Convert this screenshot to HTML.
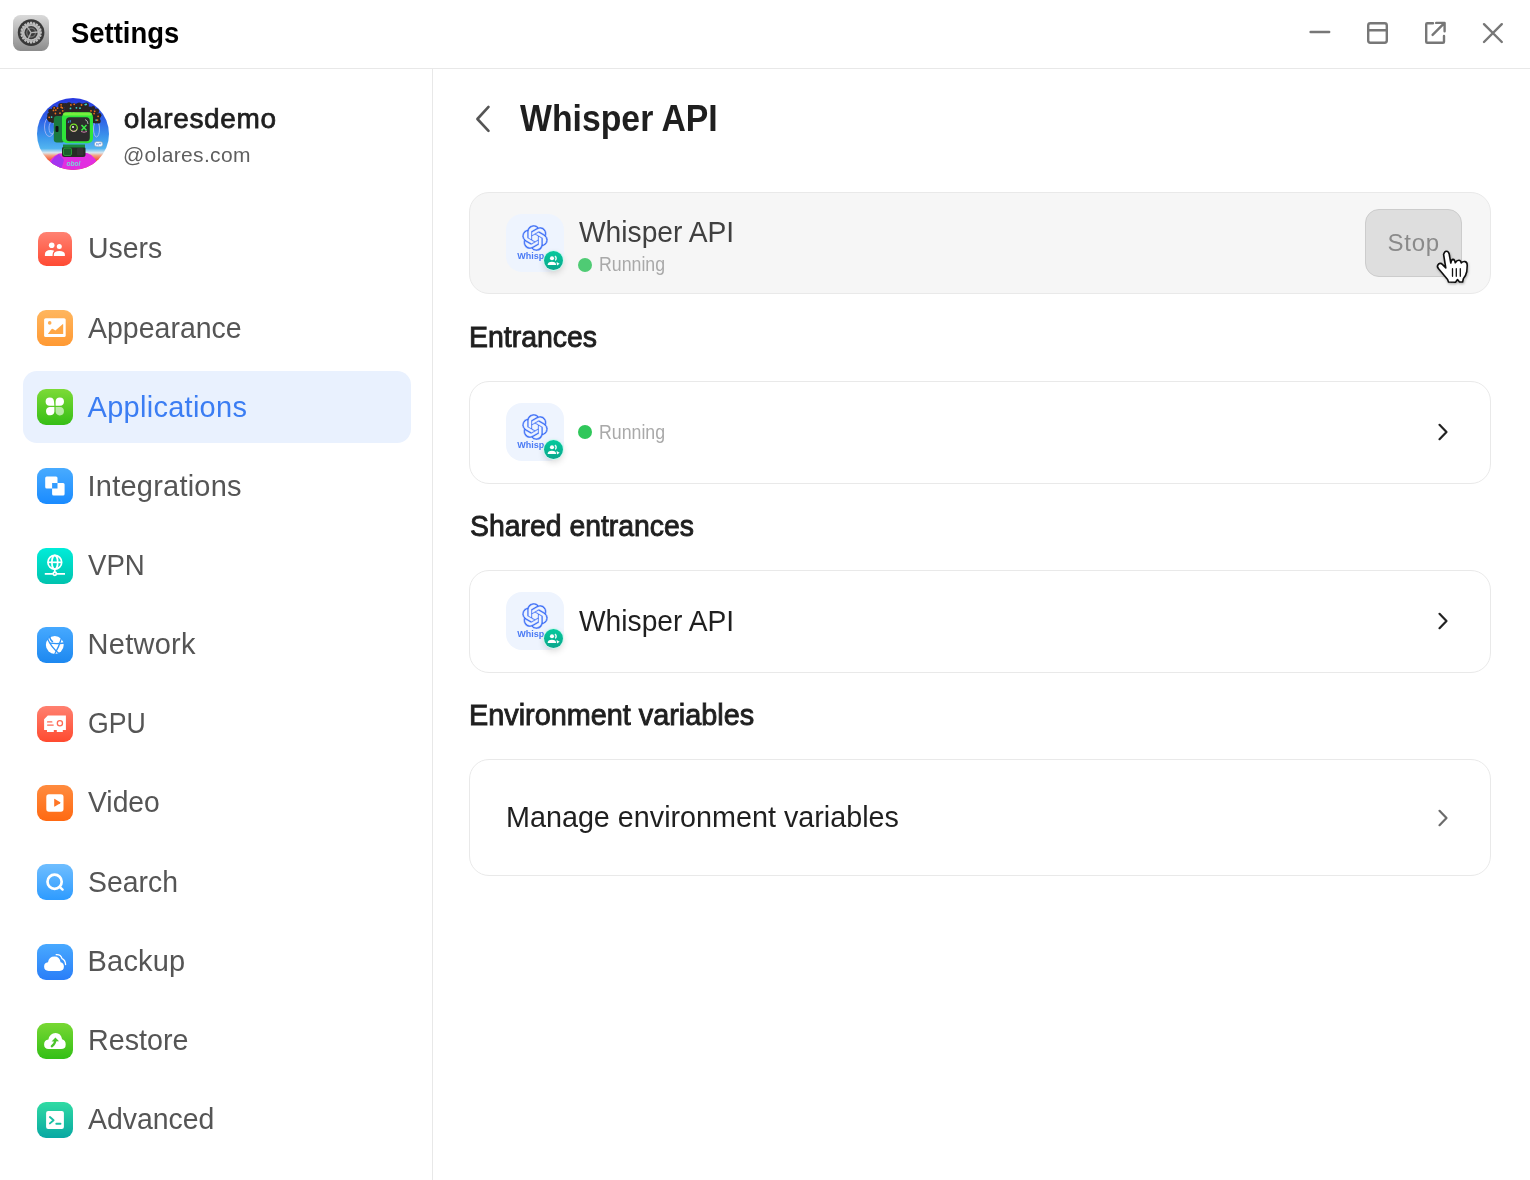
<!DOCTYPE html><html><head><meta charset="utf-8"><style>
html,body{margin:0;padding:0;}
body{width:1530px;height:1180px;position:relative;overflow:hidden;background:#fff;font-family:"Liberation Sans",sans-serif;}
.t{position:absolute;white-space:pre;}
#w{position:absolute;left:0;top:0;width:1530px;height:1180px;will-change:transform;}
.a{position:absolute;display:block;}
</style></head><body><div id="w">
<div class="a" style="left:0;top:68px;width:1530px;height:1px;background:#e8e8e8"></div>
<div class="a" style="left:432px;top:69px;width:1px;height:1111px;background:#e8e8e8"></div>
<svg class="a" style="left:13px;top:15px" width="36" height="36" viewBox="0 0 36 36"><defs><linearGradient id="gs" x1="0" y1="0" x2="0" y2="1"><stop offset="0" stop-color="#dadada"/><stop offset="1" stop-color="#8c8c8c"/></linearGradient></defs><rect width="36" height="36" rx="7.5" fill="url(#gs)"/><circle cx="18.1" cy="17.6" r="13.3" fill="#383838"/><g fill="#bdbdbd"><path d="M16.50 9.60 L17.10 6.80 L19.10 6.80 L19.70 9.60 Z" transform="rotate(0 18.1 17.6)"/><path d="M16.50 9.60 L17.10 6.80 L19.10 6.80 L19.70 9.60 Z" transform="rotate(18 18.1 17.6)"/><path d="M16.50 9.60 L17.10 6.80 L19.10 6.80 L19.70 9.60 Z" transform="rotate(36 18.1 17.6)"/><path d="M16.50 9.60 L17.10 6.80 L19.10 6.80 L19.70 9.60 Z" transform="rotate(54 18.1 17.6)"/><path d="M16.50 9.60 L17.10 6.80 L19.10 6.80 L19.70 9.60 Z" transform="rotate(72 18.1 17.6)"/><path d="M16.50 9.60 L17.10 6.80 L19.10 6.80 L19.70 9.60 Z" transform="rotate(90 18.1 17.6)"/><path d="M16.50 9.60 L17.10 6.80 L19.10 6.80 L19.70 9.60 Z" transform="rotate(108 18.1 17.6)"/><path d="M16.50 9.60 L17.10 6.80 L19.10 6.80 L19.70 9.60 Z" transform="rotate(126 18.1 17.6)"/><path d="M16.50 9.60 L17.10 6.80 L19.10 6.80 L19.70 9.60 Z" transform="rotate(144 18.1 17.6)"/><path d="M16.50 9.60 L17.10 6.80 L19.10 6.80 L19.70 9.60 Z" transform="rotate(162 18.1 17.6)"/><path d="M16.50 9.60 L17.10 6.80 L19.10 6.80 L19.70 9.60 Z" transform="rotate(180 18.1 17.6)"/><path d="M16.50 9.60 L17.10 6.80 L19.10 6.80 L19.70 9.60 Z" transform="rotate(198 18.1 17.6)"/><path d="M16.50 9.60 L17.10 6.80 L19.10 6.80 L19.70 9.60 Z" transform="rotate(216 18.1 17.6)"/><path d="M16.50 9.60 L17.10 6.80 L19.10 6.80 L19.70 9.60 Z" transform="rotate(234 18.1 17.6)"/><path d="M16.50 9.60 L17.10 6.80 L19.10 6.80 L19.70 9.60 Z" transform="rotate(252 18.1 17.6)"/><path d="M16.50 9.60 L17.10 6.80 L19.10 6.80 L19.70 9.60 Z" transform="rotate(270 18.1 17.6)"/><path d="M16.50 9.60 L17.10 6.80 L19.10 6.80 L19.70 9.60 Z" transform="rotate(288 18.1 17.6)"/><path d="M16.50 9.60 L17.10 6.80 L19.10 6.80 L19.70 9.60 Z" transform="rotate(306 18.1 17.6)"/><path d="M16.50 9.60 L17.10 6.80 L19.10 6.80 L19.70 9.60 Z" transform="rotate(324 18.1 17.6)"/><path d="M16.50 9.60 L17.10 6.80 L19.10 6.80 L19.70 9.60 Z" transform="rotate(342 18.1 17.6)"/><circle cx="18.1" cy="17.6" r="8.4"/></g><circle cx="18.1" cy="17.6" r="6.6" fill="#3a3a3a"/><circle cx="18.1" cy="17.6" r="4.4" fill="none" stroke="#707070" stroke-width="1.3"/><g stroke="#b4b4b4" stroke-width="1.3"><path d="M18.1 17.6 L18.1 10.700000000000001" transform="rotate(-35 18.1 17.6)"/><path d="M18.1 17.6 L18.1 10.700000000000001" transform="rotate(85 18.1 17.6)"/><path d="M18.1 17.6 L18.1 10.700000000000001" transform="rotate(205 18.1 17.6)"/></g></svg>
<div class="t" style="left:70.71px;top:19.00px;font-size:29px;line-height:29px;font-weight:700;color:#000;letter-spacing:0.000px;transform:scaleX(0.9451);transform-origin:0 0;">Settings</div>
<svg class="a" style="left:1300px;top:12px" width="220" height="44" viewBox="1300 12 220 44"><g stroke="#777" stroke-width="2.4" fill="none" stroke-linecap="round" stroke-linejoin="round"><path d="M1310.6 32 H1329.2"/><rect x="1368.2" y="23.2" width="18.6" height="19.6" rx="2.2"/><path d="M1368.2 30.2 H1386.8"/><path d="M1433 23.2 H1427.2 Q1426.2 23.2 1426.2 24.2 V41.8 Q1426.2 42.8 1427.2 42.8 H1443 Q1444 42.8 1444 41.8 V36"/><path d="M1436.2 22.9 H1444.6 V31.3 M1444.3 23.2 L1432.6 34.9"/><path d="M1484 24.2 L1501.8 42 M1501.8 24.2 L1484 42"/></g></svg>
<svg class="a" style="left:37px;top:98px" width="72" height="72" viewBox="0 0 72 72">
<defs><clipPath id="av"><circle cx="36" cy="36" r="36"/></clipPath>
<linearGradient id="avbg" x1="0" y1="0" x2="0" y2="1"><stop offset="0" stop-color="#2838e0"/><stop offset="0.3" stop-color="#2f62e6"/><stop offset="0.55" stop-color="#3c98ec"/><stop offset="0.7" stop-color="#52b4f0"/><stop offset="0.76" stop-color="#d8e6ee"/><stop offset="0.8" stop-color="#f4a080"/><stop offset="0.86" stop-color="#f05a38"/><stop offset="1" stop-color="#f04a2c"/></linearGradient></defs>
<g clip-path="url(#av)">
<rect width="72" height="72" fill="url(#avbg)"/>
<ellipse cx="12.5" cy="29" rx="5" ry="9.5" fill="none" stroke="#b0b8f4" stroke-width="0.9" opacity="0.9"/>
<ellipse cx="15" cy="30" rx="3" ry="6" fill="none" stroke="#c8d0f8" stroke-width="0.8" opacity="0.8"/>
<ellipse cx="59.5" cy="31" rx="3" ry="8" fill="none" stroke="#b8c8f4" stroke-width="0.9" opacity="0.9"/>
<path d="M10 72 Q11 60 22 55.5 L50 55 Q60 58 62 72 Z" fill="#e22ee0"/>
<path d="M12 72 Q13 61 22 56 L27 62 L24 72 Z" fill="#a434f0"/>
<text x="29.5" y="68" font-size="6.5" fill="#78d8d8" font-family="Liberation Sans" font-weight="700" font-style="italic">obol</text>
<rect x="25" y="48.5" width="23.5" height="10.5" rx="2.5" fill="#262b26"/>
<rect x="26.5" y="50" width="8" height="7.5" rx="1.5" fill="#1c5e2c" stroke="#2fd040" stroke-width="0.6"/>
<rect x="40" y="50" width="6.5" height="7.5" rx="1" fill="#333"/>
<rect x="26" y="46.5" width="22" height="3" fill="#1b8a3c"/>
<g fill="#2b2424"><circle cx="23.9" cy="7.6" r="2.6"/><circle cx="26.2" cy="7.5" r="2.4"/><circle cx="28.7" cy="7.2" r="2.1"/><circle cx="32.0" cy="6.9" r="2.6"/><circle cx="34.6" cy="7.7" r="2.1"/><circle cx="36.6" cy="7.1" r="2.0"/><circle cx="39.6" cy="7.7" r="2.3"/><circle cx="42.1" cy="7.2" r="2.6"/><circle cx="45.2" cy="7.8" r="2.2"/><circle cx="47.7" cy="7.4" r="2.5"/><circle cx="49.4" cy="7.1" r="2.5"/><circle cx="17.5" cy="10.7" r="2.5"/><circle cx="21.3" cy="10.9" r="2.1"/><circle cx="23.8" cy="10.0" r="2.3"/><circle cx="25.7" cy="10.7" r="2.1"/><circle cx="29.4" cy="10.9" r="2.2"/><circle cx="31.2" cy="10.4" r="2.5"/><circle cx="33.8" cy="11.2" r="2.1"/><circle cx="36.8" cy="9.9" r="2.1"/><circle cx="39.4" cy="10.6" r="2.2"/><circle cx="42.5" cy="11.0" r="2.1"/><circle cx="44.8" cy="10.1" r="2.4"/><circle cx="47.5" cy="11.1" r="2.5"/><circle cx="50.5" cy="9.9" r="2.0"/><circle cx="53.0" cy="10.8" r="2.2"/><circle cx="56.1" cy="10.2" r="2.1"/><circle cx="13.5" cy="13.1" r="2.3"/><circle cx="16.8" cy="13.2" r="2.6"/><circle cx="19.3" cy="12.9" r="2.1"/><circle cx="22.0" cy="14.0" r="2.6"/><circle cx="25.1" cy="13.6" r="2.1"/><circle cx="27.8" cy="14.1" r="2.0"/><circle cx="30.2" cy="13.8" r="2.2"/><circle cx="32.4" cy="13.6" r="2.4"/><circle cx="35.9" cy="13.8" r="2.5"/><circle cx="38.2" cy="13.8" r="2.5"/><circle cx="41.0" cy="13.9" r="2.5"/><circle cx="43.9" cy="13.3" r="2.3"/><circle cx="46.0" cy="13.7" r="2.6"/><circle cx="49.5" cy="13.3" r="2.4"/><circle cx="51.8" cy="14.0" r="2.1"/><circle cx="54.0" cy="13.6" r="2.3"/><circle cx="57.4" cy="14.1" r="2.2"/><circle cx="59.6" cy="13.0" r="2.5"/><circle cx="12.4" cy="17.0" r="2.2"/><circle cx="14.9" cy="16.4" r="2.5"/><circle cx="18.4" cy="16.3" r="2.3"/><circle cx="21.1" cy="17.0" r="2.4"/><circle cx="23.1" cy="16.0" r="2.3"/><circle cx="26.3" cy="16.5" r="2.2"/><circle cx="29.4" cy="16.4" r="2.0"/><circle cx="31.8" cy="16.6" r="2.2"/><circle cx="33.7" cy="16.0" r="2.3"/><circle cx="36.6" cy="15.9" r="2.4"/><circle cx="40.1" cy="17.1" r="2.4"/><circle cx="41.9" cy="16.5" r="2.4"/><circle cx="45.4" cy="16.5" r="2.4"/><circle cx="47.8" cy="16.9" r="2.5"/><circle cx="50.2" cy="16.4" r="2.4"/><circle cx="53.2" cy="16.6" r="2.5"/><circle cx="56.6" cy="16.4" r="2.4"/><circle cx="58.9" cy="16.8" r="2.1"/><circle cx="62.1" cy="17.2" r="2.3"/><circle cx="12.3" cy="20.1" r="2.5"/><circle cx="15.3" cy="19.9" r="2.3"/><circle cx="18.3" cy="19.0" r="2.2"/><circle cx="20.2" cy="19.0" r="2.3"/><circle cx="23.8" cy="19.8" r="2.6"/><circle cx="25.8" cy="19.5" r="2.2"/><circle cx="29.0" cy="19.5" r="2.5"/><circle cx="31.3" cy="19.3" r="2.5"/><circle cx="33.9" cy="20.0" r="2.6"/><circle cx="37.1" cy="19.1" r="2.3"/><circle cx="39.8" cy="18.8" r="2.6"/><circle cx="42.3" cy="19.9" r="2.3"/><circle cx="45.2" cy="19.4" r="2.6"/><circle cx="47.6" cy="19.5" r="2.1"/><circle cx="50.6" cy="19.2" r="2.1"/><circle cx="53.8" cy="19.0" r="2.5"/><circle cx="56.3" cy="19.3" r="2.2"/><circle cx="58.3" cy="19.8" r="2.1"/><circle cx="61.2" cy="19.1" r="2.3"/><circle cx="13.0" cy="22.0" r="2.1"/><circle cx="15.8" cy="22.5" r="2.5"/><circle cx="18.8" cy="22.1" r="2.4"/><circle cx="21.5" cy="22.2" r="2.2"/><circle cx="23.3" cy="23.2" r="2.5"/><circle cx="26.0" cy="21.9" r="2.5"/><circle cx="28.9" cy="22.8" r="2.0"/><circle cx="32.2" cy="22.0" r="2.3"/><circle cx="34.3" cy="22.8" r="2.1"/><circle cx="37.1" cy="22.5" r="2.3"/><circle cx="40.1" cy="23.2" r="2.6"/><circle cx="42.3" cy="22.9" r="2.2"/><circle cx="45.1" cy="21.8" r="2.4"/><circle cx="47.3" cy="22.4" r="2.4"/><circle cx="50.3" cy="21.8" r="2.5"/><circle cx="53.2" cy="23.0" r="2.4"/><circle cx="56.2" cy="22.9" r="2.2"/><circle cx="58.6" cy="22.9" r="2.5"/><circle cx="61.2" cy="22.9" r="2.5"/></g><circle cx="24.1" cy="6.8" r="0.9" fill="#e8701c"/><circle cx="33.9" cy="6.9" r="0.9" fill="#e8701c"/><circle cx="37.2" cy="6.3" r="0.9" fill="#e8701c"/><circle cx="44.5" cy="7.0" r="0.9" fill="#e8701c"/><circle cx="48.3" cy="6.6" r="0.9" fill="#3ad4cc"/><circle cx="49.2" cy="6.3" r="0.9" fill="#3ad4cc"/><circle cx="17.2" cy="9.9" r="0.9" fill="#e8701c"/><circle cx="20.6" cy="10.1" r="0.9" fill="#e8701c"/><circle cx="24.2" cy="9.2" r="0.9" fill="#e8701c"/><circle cx="25.3" cy="9.9" r="0.9" fill="#e8701c"/><circle cx="33.5" cy="10.4" r="0.9" fill="#3ad4cc"/><circle cx="39.4" cy="9.8" r="0.9" fill="#3ad4cc"/><circle cx="43.0" cy="10.2" r="0.9" fill="#3ad4cc"/><circle cx="16.5" cy="12.4" r="0.9" fill="#e8701c"/><circle cx="18.8" cy="12.1" r="0.9" fill="#e8701c"/><circle cx="25.7" cy="12.8" r="0.9" fill="#e8701c"/><circle cx="54.0" cy="12.8" r="0.9" fill="#e8701c"/><circle cx="57.7" cy="13.3" r="0.9" fill="#e8701c"/><circle cx="18.4" cy="15.5" r="0.9" fill="#e8701c"/><circle cx="23.0" cy="15.2" r="0.9" fill="#e8701c"/><circle cx="28.7" cy="15.6" r="0.9" fill="#3ad4cc"/><circle cx="33.3" cy="15.2" r="0.9" fill="#3ad4cc"/><circle cx="36.8" cy="15.1" r="0.9" fill="#e8701c"/><circle cx="39.6" cy="16.3" r="0.9" fill="#e8701c"/><circle cx="41.6" cy="15.7" r="0.9" fill="#e8701c"/><circle cx="48.1" cy="16.1" r="0.9" fill="#3ad4cc"/><circle cx="57.1" cy="15.6" r="0.9" fill="#e8701c"/><circle cx="12.2" cy="19.3" r="0.9" fill="#e8701c"/><circle cx="14.6" cy="19.1" r="0.9" fill="#3ad4cc"/><circle cx="23.1" cy="19.0" r="0.9" fill="#3ad4cc"/><circle cx="41.6" cy="19.1" r="0.9" fill="#e8701c"/><circle cx="48.3" cy="18.7" r="0.9" fill="#3ad4cc"/><circle cx="53.4" cy="18.2" r="0.9" fill="#e8701c"/><circle cx="61.1" cy="18.3" r="0.9" fill="#e8701c"/><circle cx="23.7" cy="22.4" r="0.9" fill="#e8701c"/><circle cx="25.4" cy="21.1" r="0.9" fill="#3ad4cc"/><circle cx="29.5" cy="22.0" r="0.9" fill="#e8701c"/><circle cx="33.6" cy="22.0" r="0.9" fill="#e8701c"/><circle cx="36.6" cy="21.7" r="0.9" fill="#e8701c"/><circle cx="40.8" cy="22.4" r="0.9" fill="#e8701c"/><circle cx="42.2" cy="22.1" r="0.9" fill="#e8701c"/><circle cx="46.7" cy="21.6" r="0.9" fill="#e8701c"/><circle cx="53.3" cy="22.2" r="0.9" fill="#e8701c"/><circle cx="59.2" cy="22.1" r="0.9" fill="#3ad4cc"/><circle cx="60.5" cy="22.1" r="0.9" fill="#e8701c"/>
<rect x="16.8" y="18" width="11" height="26.5" rx="3" fill="#1a7a3e"/>
<rect x="18.5" y="28" width="3" height="6" rx="1" fill="#111"/>
<rect x="25" y="14.2" width="31" height="31" rx="5" fill="#2fe63a"/>
<rect x="26" y="14.6" width="29" height="3" rx="1.5" fill="#8af040" opacity="0.8"/>
<rect x="29" y="19.3" width="23.8" height="23.9" rx="3.5" fill="#2c2c2c"/>
<path d="M48 21.5 Q51 22.5 51 26" stroke="#cfcfcf" stroke-width="0.8" fill="none"/>
<circle cx="36.7" cy="29.7" r="3.6" fill="none" stroke="#78e028" stroke-width="1.3"/>
<path d="M33.5 31.5 Q36.7 35.5 40 31.5" stroke="#f090c8" stroke-width="1" fill="none"/>
<circle cx="36" cy="29" r="1.1" fill="#e8e8e8"/>
<path d="M44.5 27 L49.5 32.5 M49.5 27 L44.5 32.5" stroke="#3ce848" stroke-width="1.5"/>
<path d="M44 33.5 Q47 35 50 33.5" stroke="#f090c8" stroke-width="0.8" fill="none"/>
<path d="M32 22.5 L31.2 25 M33.6 22.2 L33.2 24.6" stroke="#3aa0f0" stroke-width="0.8"/>
<rect x="57.3" y="43.5" width="8.5" height="5.2" rx="2.6" fill="#f4f8ff" stroke="#7a8aa0" stroke-width="0.5"/>
<path d="M59.5 45 V47.3 M60 45 L61.3 47.3 M61.3 45 V47.3 M62.5 45 H63.8 V46 H62.5 Z" stroke="#3a7ae0" stroke-width="0.5" fill="none"/>
</g></svg>
<div class="t" style="left:123.82px;top:105.00px;font-size:28px;line-height:28px;font-weight:400;color:#1f1f1f;letter-spacing:0.672px;-webkit-text-stroke:0.75px #1f1f1f;">olaresdemo</div>
<div class="t" style="left:122.95px;top:144.00px;font-size:21px;line-height:21px;font-weight:400;color:#5f5f5f;letter-spacing:0.351px;">@olares.com</div>
<div class="a" style="left:23px;top:371px;width:388px;height:72px;border-radius:14px;background:#e9f1fe"></div>
<svg class="a" style="left:38px;top:232px" width="34" height="34" viewBox="0 0 34 34"><defs><linearGradient id="ig0" x1="0" y1="0" x2="0" y2="1"><stop offset="0" stop-color="#ff8272"/><stop offset="1" stop-color="#ff4a33"/></linearGradient></defs><rect width="34" height="34" rx="8.5" fill="url(#ig0)"/><circle cx="13.7" cy="13.2" r="2.8" fill="#fff"/><circle cx="21.3" cy="14.6" r="2.5" fill="#fff"/><path d="M6.9 24 V22.6 Q6.9 18.1 12.6 18.1 Q14.8 18.1 16.2 18.8 Q14.6 20.2 14.6 22.6 V24 Z" fill="#fff"/><path d="M15.8 24 V22.8 Q15.8 19.1 21.35 19.1 Q26.9 19.1 26.9 22.8 V24 Z" fill="#fff"/></svg>
<div class="t" style="left:87.60px;top:234.00px;font-size:29px;line-height:29px;font-weight:400;color:#555555;letter-spacing:0.000px;transform:scaleX(0.9801);transform-origin:0 0;">Users</div>
<svg class="a" style="left:37px;top:310px" width="36" height="36" viewBox="0 0 36 36"><defs><linearGradient id="ig1" x1="0" y1="0" x2="0" y2="1"><stop offset="0" stop-color="#ffb65e"/><stop offset="1" stop-color="#ff9933"/></linearGradient></defs><rect width="36" height="36" rx="9" fill="url(#ig1)"/><rect x="7.1" y="8.2" width="21.6" height="18.9" rx="1.6" fill="#fff"/><circle cx="12.7" cy="12.9" r="1.8" fill="#ffad50"/><path d="M10.9 23.9 L14.2 19.6 Q15.2 18.3 16.4 19.3 L18.4 20.6 L25.6 14.2 Q26.2 13.8 26.2 14.6 V23.9 Z" fill="#ffa745"/></svg>
<div class="t" style="left:87.60px;top:314.00px;font-size:29px;line-height:29px;font-weight:400;color:#555555;letter-spacing:0.000px;transform:scaleX(0.9829);transform-origin:0 0;">Appearance</div>
<svg class="a" style="left:37px;top:389px" width="36" height="36" viewBox="0 0 36 36"><defs><linearGradient id="ig2" x1="0" y1="0" x2="0" y2="1"><stop offset="0" stop-color="#7cda36"/><stop offset="1" stop-color="#36be16"/></linearGradient></defs><rect width="36" height="36" rx="9" fill="url(#ig2)"/><path d="M17.4 16.8 H12.6 A4.2 4.2 0 1 1 17 12.4 Z" fill="#fff"/><path d="M18.6 16.8 V12.4 A4.2 4.2 0 1 1 23 16.8 Z" fill="#fff"/><path d="M17.4 18 V22.6 A4.2 4.2 0 1 1 12.6 18 Z" fill="#fff"/><path d="M18.6 18 H23 A4.2 4.2 0 1 1 18.6 22.6 Z" fill="#fff" fill-opacity="0.6"/></svg>
<div class="t" style="left:87.60px;top:393.00px;font-size:29px;line-height:29px;font-weight:400;color:#3b7df3;letter-spacing:0.267px;">Applications</div>
<svg class="a" style="left:37px;top:468px" width="36" height="36" viewBox="0 0 36 36"><defs><linearGradient id="ig3" x1="0" y1="0" x2="0" y2="1"><stop offset="0" stop-color="#48abff"/><stop offset="1" stop-color="#1a8bff"/></linearGradient></defs><rect width="36" height="36" rx="9" fill="url(#ig3)"/><path fill="#fff" fill-rule="evenodd" d="M9.7 8.4 H19 Q20.5 8.4 20.5 9.9 V15.1 H15.1 V20.5 H9.7 Q8.2 20.5 8.2 19 V9.9 Q8.2 8.4 9.7 8.4 Z M20.5 15.1 H26.1 Q27.6 15.1 27.6 16.6 V26.1 Q27.6 27.6 26.1 27.6 H16.6 Q15.1 27.6 15.1 26.1 V20.5 H20.5 Z"/></svg>
<div class="t" style="left:87.60px;top:472.00px;font-size:29px;line-height:29px;font-weight:400;color:#555555;letter-spacing:0.217px;">Integrations</div>
<svg class="a" style="left:37px;top:548px" width="36" height="36" viewBox="0 0 36 36"><defs><linearGradient id="ig4" x1="0" y1="0" x2="0" y2="1"><stop offset="0" stop-color="#00ecd9"/><stop offset="1" stop-color="#00c3ae"/></linearGradient></defs><rect width="36" height="36" rx="9" fill="url(#ig4)"/><g stroke="#fff" stroke-width="1.7" fill="none"><circle cx="17.8" cy="14.3" r="6.9"/><ellipse cx="17.8" cy="14.3" rx="2.9" ry="6.9"/><path d="M11 14.3 H24.6"/><path d="M17.8 21.2 V24"/><path d="M7.8 25.8 H15.9 M19.7 25.8 H28"/><circle cx="17.8" cy="25.8" r="1.6"/></g></svg>
<div class="t" style="left:87.60px;top:551.00px;font-size:29px;line-height:29px;font-weight:400;color:#555555;letter-spacing:0.000px;transform:scaleX(0.9521);transform-origin:0 0;">VPN</div>
<svg class="a" style="left:37px;top:627px" width="36" height="36" viewBox="0 0 36 36"><defs><linearGradient id="ig5" x1="0" y1="0" x2="0" y2="1"><stop offset="0" stop-color="#46a9ff"/><stop offset="1" stop-color="#1d88f0"/></linearGradient></defs><rect width="36" height="36" rx="9" fill="url(#ig5)"/><circle cx="17.8" cy="18" r="8.9" fill="#fff"/><g stroke="#2f95f8" stroke-width="1.3" fill="none"><path d="M10.5 11.5 Q14 20 22 26.5"/><path d="M13 16.2 Q20 17.2 27 16"/><path d="M24.5 11 Q22 20 17.5 27.5"/><path d="M12.5 8.8 Q13 13 16 15"/></g></svg>
<div class="t" style="left:87.60px;top:630.00px;font-size:29px;line-height:29px;font-weight:400;color:#555555;letter-spacing:0.263px;">Network</div>
<svg class="a" style="left:37px;top:706px" width="36" height="36" viewBox="0 0 36 36"><defs><linearGradient id="ig6" x1="0" y1="0" x2="0" y2="1"><stop offset="0" stop-color="#ff8070"/><stop offset="1" stop-color="#ff4a2f"/></linearGradient></defs><rect width="36" height="36" rx="9" fill="url(#ig6)"/><path d="M10.8 9.5 H28.9 V24.1 H25.8 V25.9 H19.8 V24.1 H16.8 V25.9 H10 V24.1 H7.1 V13.2 Z" fill="#fff"/><g stroke="#ff6a55" stroke-width="1.3" fill="none" stroke-linecap="round"><path d="M10.6 15.9 H14.8 M10.6 19.1 H16.2"/><circle cx="22.9" cy="17.2" r="2.6"/></g></svg>
<div class="t" style="left:87.60px;top:709.00px;font-size:29px;line-height:29px;font-weight:400;color:#555555;letter-spacing:0.000px;transform:scaleX(0.9197);transform-origin:0 0;">GPU</div>
<svg class="a" style="left:37px;top:785px" width="36" height="36" viewBox="0 0 36 36"><defs><linearGradient id="ig7" x1="0" y1="0" x2="0" y2="1"><stop offset="0" stop-color="#ff8b3e"/><stop offset="1" stop-color="#ff6912"/></linearGradient></defs><rect width="36" height="36" rx="9" fill="url(#ig7)"/><rect x="9.3" y="9.3" width="17.2" height="17.4" rx="2.6" fill="#fff"/><path d="M17.2 14.4 Q17.2 13.6 17.9 14 L23.2 17.2 Q23.9 17.8 23.2 18.3 L17.9 21.5 Q17.2 21.9 17.2 21.1 Z" fill="#ff7525"/></svg>
<div class="t" style="left:87.60px;top:788.00px;font-size:29px;line-height:29px;font-weight:400;color:#555555;letter-spacing:0.000px;transform:scaleX(0.9749);transform-origin:0 0;">Video</div>
<svg class="a" style="left:37px;top:864px" width="36" height="36" viewBox="0 0 36 36"><defs><linearGradient id="ig8" x1="0" y1="0" x2="0" y2="1"><stop offset="0" stop-color="#6fbeff"/><stop offset="1" stop-color="#2e9bff"/></linearGradient></defs><rect width="36" height="36" rx="9" fill="url(#ig8)"/><circle cx="17.6" cy="17.8" r="7.1" stroke="#fff" stroke-width="2.7" fill="none"/><path d="M23.2 23.3 L25.6 25.6" stroke="#fff" stroke-width="2.4" stroke-linecap="round"/></svg>
<div class="t" style="left:87.60px;top:868.00px;font-size:29px;line-height:29px;font-weight:400;color:#555555;letter-spacing:0.000px;transform:scaleX(0.9787);transform-origin:0 0;">Search</div>
<svg class="a" style="left:37px;top:944px" width="36" height="36" viewBox="0 0 36 36"><defs><linearGradient id="ig9" x1="0" y1="0" x2="0" y2="1"><stop offset="0" stop-color="#48a9ff"/><stop offset="1" stop-color="#2a7ef8"/></linearGradient></defs><rect width="36" height="36" rx="9" fill="url(#ig9)"/><path d="M11.6 26.9 Q7.1 26.9 7.1 22.6 Q7.1 18.7 11 18.3 Q11.8 12.6 17.6 12.6 Q22.6 12.6 23.6 18.2 Q26.9 19 26.9 22.6 Q26.9 26.9 22.6 26.9 Z" fill="#fff"/><path d="M19.2 10.7 Q23.7 10.3 25 14.6 Q28.3 15.9 28.6 20.5" stroke="#fff" stroke-width="1.3" fill="none" stroke-linecap="round"/></svg>
<div class="t" style="left:87.60px;top:947.00px;font-size:29px;line-height:29px;font-weight:400;color:#555555;letter-spacing:0.174px;">Backup</div>
<svg class="a" style="left:37px;top:1023px" width="36" height="36" viewBox="0 0 36 36"><defs><linearGradient id="ig10" x1="0" y1="0" x2="0" y2="1"><stop offset="0" stop-color="#78d833"/><stop offset="1" stop-color="#33bf16"/></linearGradient></defs><rect width="36" height="36" rx="9" fill="url(#ig10)"/><path d="M11.6 26 Q7.1 26 7.1 21.6 Q7.1 17.3 11.4 16.6 Q12.8 10.1 18.6 10.1 Q23.9 10.1 25.1 16.2 Q28.7 17.2 28.7 21.4 Q28.7 26 24 26 Z" fill="#fff"/><path d="M14.8 23.2 Q18.2 21 18.4 16.8" stroke="#4cc52b" stroke-width="2.3" fill="none" stroke-linecap="round"/><path d="M14.6 18.6 L18.4 14.4 L22 18.2 Z" fill="#4cc52b"/></svg>
<div class="t" style="left:87.60px;top:1026.00px;font-size:29px;line-height:29px;font-weight:400;color:#555555;letter-spacing:0.000px;transform:scaleX(0.9890);transform-origin:0 0;">Restore</div>
<svg class="a" style="left:37px;top:1102px" width="36" height="36" viewBox="0 0 36 36"><defs><linearGradient id="ig11" x1="0" y1="0" x2="0" y2="1"><stop offset="0" stop-color="#30dba3"/><stop offset="1" stop-color="#08a8a3"/></linearGradient></defs><rect width="36" height="36" rx="9" fill="url(#ig11)"/><rect x="9.1" y="9.1" width="17.8" height="17.8" rx="2" fill="#fff"/><g stroke="#19c0a5" stroke-width="1.9" fill="none" stroke-linecap="round" stroke-linejoin="round"><path d="M12.9 15 L16.6 18.2 L12.9 21.4"/><path d="M19.3 21.7 H23.5"/></g></svg>
<div class="t" style="left:87.60px;top:1105.00px;font-size:29px;line-height:29px;font-weight:400;color:#555555;letter-spacing:0.000px;transform:scaleX(0.9799);transform-origin:0 0;">Advanced</div>
<svg class="a" style="left:470px;top:100px" width="26" height="38" viewBox="0 0 26 38"><path d="M18.5 6.9 L7.4 19 L18.5 30.8" stroke="#555" stroke-width="2.6" fill="none" stroke-linecap="round" stroke-linejoin="round"/></svg>
<div class="t" style="left:519.97px;top:100.00px;font-size:37px;line-height:37px;font-weight:700;color:#1f1f1f;letter-spacing:0.000px;transform:scaleX(0.9132);transform-origin:0 0;">Whisper API</div>
<div class="a" style="left:469px;top:192px;width:1020px;height:100px;border:1px solid #e9e9e9;border-radius:20px;background:#f6f6f6"></div>
<div class="a" style="left:506px;top:214px;width:58px;height:58px;border-radius:16px;background:#eef4fe"></div><svg class="a" style="left:522.2px;top:224.9px" width="26" height="26" viewBox="0 0 24 24"><path fill="#3c6ef6" stroke="#eef4fe" stroke-width="0.4" d="M22.2819 9.8211a5.9847 5.9847 0 0 0-.5157-4.9108 6.0462 6.0462 0 0 0-6.5098-2.9A6.0651 6.0651 0 0 0 4.9807 4.1818a5.9847 5.9847 0 0 0-3.9977 2.9 6.0462 6.0462 0 0 0 .7427 7.0966 5.98 5.98 0 0 0 .511 4.9107 6.051 6.051 0 0 0 6.5146 2.9001A5.9847 5.9847 0 0 0 13.2599 24a6.0557 6.0557 0 0 0 5.7718-4.2058 5.9894 5.9894 0 0 0 3.9977-2.9001 6.0557 6.0557 0 0 0-.7475-7.0729zm-9.022 12.6081a4.4755 4.4755 0 0 1-2.8764-1.0408l.1419-.0804 4.7783-2.7582a.7948.7948 0 0 0 .3927-.6813v-6.7369l2.02 1.1686a.071.071 0 0 1 .038.052v5.5826a4.504 4.504 0 0 1-4.4945 4.4944zm-9.6607-4.1254a4.4708 4.4708 0 0 1-.5346-3.0137l.142.0852 4.783 2.7582a.7712.7712 0 0 0 .7806 0l5.8428-3.3685v2.3324a.0804.0804 0 0 1-.0332.0615L9.74 19.9502a4.4992 4.4992 0 0 1-6.1408-1.6464zM2.3408 7.8956a4.485 4.485 0 0 1 2.3655-1.9728V11.6a.7664.7664 0 0 0 .3879.6765l5.8144 3.3543-2.0201 1.1685a.0757.0757 0 0 1-.071 0l-4.8303-2.7865A4.504 4.504 0 0 1 2.3408 7.872zm16.5963 3.8558L13.1038 8.364 15.1192 7.2a.0757.0757 0 0 1 .071 0l4.8303 2.7913a4.4944 4.4944 0 0 1-.6765 8.1042v-5.6772a.79.79 0 0 0-.407-.667zm2.0107-3.0231l-.142-.0852-4.7735-2.7818a.7759.7759 0 0 0-.7854 0L9.409 9.2297V6.8974a.0662.0662 0 0 1 .0284-.0615l4.8303-2.7866a4.4992 4.4992 0 0 1 6.6802 4.66zM8.3065 12.863l-2.02-1.1638a.0804.0804 0 0 1-.038-.0567V6.0742a4.4992 4.4992 0 0 1 7.3757-3.4537l-.142.0805L8.704 5.459a.7948.7948 0 0 0-.3927.6813zm1.0976-2.3654l2.602-1.4998 2.6069 1.4998v2.9994l-2.5974 1.4997-2.6067-1.4997Z"/></svg><div class="t" style="left:517.3px;top:251.6px;font-size:9px;line-height:9px;font-weight:700;color:#4a7af4;letter-spacing:0px">Whisp</div><div class="a" style="left:543.9px;top:251.1px;width:19px;height:19px;border-radius:50%;background:linear-gradient(#04ca9c,#0aa68c);box-shadow:0 0 0 0.9px #c9fbef,0 3px 7px rgba(0,0,0,0.16)"></div><svg class="a" style="left:543.9px;top:251.1px" width="19" height="19" viewBox="0 0 19 19"><circle cx="8" cy="7.3" r="2.05" fill="#fff"/><path d="M3.6 14 Q3.8 10.8 7.9 10.8 Q12 10.8 12.1 14 Z" fill="#fff"/><path d="M10.8 5.3 A2.3 2.3 0 0 1 11.2 9.3" stroke="#fff" stroke-width="1.5" fill="none" opacity="0.9"/><path d="M12.6 11.1 L15.6 12.8 L13 14.5 Z" fill="#fff"/></svg>
<div class="t" style="left:578.88px;top:218.00px;font-size:29px;line-height:29px;font-weight:400;color:#404040;letter-spacing:0.000px;transform:scaleX(0.9725);transform-origin:0 0;">Whisper API</div>
<div class="a" style="left:578px;top:257.5px;width:14px;height:14px;border-radius:50%;background:#4fcb74"></div>
<div class="t" style="left:599.04px;top:254.00px;font-size:20px;line-height:20px;font-weight:400;color:#a9a9a9;letter-spacing:0.000px;transform:scaleX(0.8872);transform-origin:0 0;">Running</div>
<div class="a" style="left:1365px;top:209px;width:95px;height:66px;border:1px solid #cccccc;border-radius:14px;background:#dedede"></div>
<div class="t" style="left:1387.51px;top:231.00px;font-size:24px;line-height:24px;font-weight:400;color:#8a8a8a;letter-spacing:0.776px;">Stop</div>
<svg class="a" style="left:1430px;top:245px" width="45" height="45" viewBox="0 0 45 45">
<defs><filter id="cs" x="-30%" y="-30%" width="160%" height="160%"><feDropShadow dx="0.6" dy="1.2" stdDeviation="0.9" flood-opacity="0.3"/></filter></defs>
<path filter="url(#cs)" d="M13.6 9.5 Q14.5 6 16.4 6.2 Q18.6 6.4 19.2 9 L20.8 18 Q21.5 14.3 23.1 14.4 Q24.8 14.6 25.3 17.8 Q26.8 15 29 15.2 Q30.8 15.4 31.2 18 Q32.8 16.2 35 16.6 Q37.4 17.2 37.2 20.5 L36.8 26.5 Q36 30.5 33.4 33.5 L32.6 37 L29.5 37 L27.5 34.6 L25.5 37.2 L18.5 37 L17.6 34.5 L8.4 23.6 Q6.4 21 8.6 19 Q10.6 17.6 12.6 19.6 L15.8 23 Z" fill="#fff" stroke="#111" stroke-width="1.6" stroke-linejoin="round"/>
<path d="M22.5 23.7 V31.3 M26.3 23.7 V31.3 M30.3 23.7 V31.3" stroke="#111" stroke-width="1.3" stroke-linecap="round"/>
</svg>
<div class="t" style="left:468.87px;top:323.00px;font-size:29px;line-height:29px;font-weight:400;color:#1f1f1f;letter-spacing:0.000px;-webkit-text-stroke:0.9px #1f1f1f;transform:scaleX(0.9808);transform-origin:0 0;">Entrances</div>
<div class="a" style="left:469px;top:381px;width:1020px;height:101px;border:1px solid #e9e9e9;border-radius:20px;background:#fff"></div>
<div class="a" style="left:506px;top:403px;width:58px;height:58px;border-radius:16px;background:#eef4fe"></div><svg class="a" style="left:522.2px;top:413.9px" width="26" height="26" viewBox="0 0 24 24"><path fill="#3c6ef6" stroke="#eef4fe" stroke-width="0.4" d="M22.2819 9.8211a5.9847 5.9847 0 0 0-.5157-4.9108 6.0462 6.0462 0 0 0-6.5098-2.9A6.0651 6.0651 0 0 0 4.9807 4.1818a5.9847 5.9847 0 0 0-3.9977 2.9 6.0462 6.0462 0 0 0 .7427 7.0966 5.98 5.98 0 0 0 .511 4.9107 6.051 6.051 0 0 0 6.5146 2.9001A5.9847 5.9847 0 0 0 13.2599 24a6.0557 6.0557 0 0 0 5.7718-4.2058 5.9894 5.9894 0 0 0 3.9977-2.9001 6.0557 6.0557 0 0 0-.7475-7.0729zm-9.022 12.6081a4.4755 4.4755 0 0 1-2.8764-1.0408l.1419-.0804 4.7783-2.7582a.7948.7948 0 0 0 .3927-.6813v-6.7369l2.02 1.1686a.071.071 0 0 1 .038.052v5.5826a4.504 4.504 0 0 1-4.4945 4.4944zm-9.6607-4.1254a4.4708 4.4708 0 0 1-.5346-3.0137l.142.0852 4.783 2.7582a.7712.7712 0 0 0 .7806 0l5.8428-3.3685v2.3324a.0804.0804 0 0 1-.0332.0615L9.74 19.9502a4.4992 4.4992 0 0 1-6.1408-1.6464zM2.3408 7.8956a4.485 4.485 0 0 1 2.3655-1.9728V11.6a.7664.7664 0 0 0 .3879.6765l5.8144 3.3543-2.0201 1.1685a.0757.0757 0 0 1-.071 0l-4.8303-2.7865A4.504 4.504 0 0 1 2.3408 7.872zm16.5963 3.8558L13.1038 8.364 15.1192 7.2a.0757.0757 0 0 1 .071 0l4.8303 2.7913a4.4944 4.4944 0 0 1-.6765 8.1042v-5.6772a.79.79 0 0 0-.407-.667zm2.0107-3.0231l-.142-.0852-4.7735-2.7818a.7759.7759 0 0 0-.7854 0L9.409 9.2297V6.8974a.0662.0662 0 0 1 .0284-.0615l4.8303-2.7866a4.4992 4.4992 0 0 1 6.6802 4.66zM8.3065 12.863l-2.02-1.1638a.0804.0804 0 0 1-.038-.0567V6.0742a4.4992 4.4992 0 0 1 7.3757-3.4537l-.142.0805L8.704 5.459a.7948.7948 0 0 0-.3927.6813zm1.0976-2.3654l2.602-1.4998 2.6069 1.4998v2.9994l-2.5974 1.4997-2.6067-1.4997Z"/></svg><div class="t" style="left:517.3px;top:440.6px;font-size:9px;line-height:9px;font-weight:700;color:#4a7af4;letter-spacing:0px">Whisp</div><div class="a" style="left:543.9px;top:440.1px;width:19px;height:19px;border-radius:50%;background:linear-gradient(#04ca9c,#0aa68c);box-shadow:0 0 0 0.9px #c9fbef,0 3px 7px rgba(0,0,0,0.16)"></div><svg class="a" style="left:543.9px;top:440.1px" width="19" height="19" viewBox="0 0 19 19"><circle cx="8" cy="7.3" r="2.05" fill="#fff"/><path d="M3.6 14 Q3.8 10.8 7.9 10.8 Q12 10.8 12.1 14 Z" fill="#fff"/><path d="M10.8 5.3 A2.3 2.3 0 0 1 11.2 9.3" stroke="#fff" stroke-width="1.5" fill="none" opacity="0.9"/><path d="M12.6 11.1 L15.6 12.8 L13 14.5 Z" fill="#fff"/></svg>
<div class="a" style="left:578px;top:425px;width:14px;height:14px;border-radius:50%;background:#2fc75a"></div>
<div class="t" style="left:599.04px;top:422.00px;font-size:20px;line-height:20px;font-weight:400;color:#a9a9a9;letter-spacing:0.000px;transform:scaleX(0.8872);transform-origin:0 0;">Running</div>
<svg class="a" style="left:1435.3px;top:420px" width="16" height="24" viewBox="0 0 16 24"><path d="M4.5 4.8 L11.5 12 L4.5 19.2" stroke="#222" stroke-width="2.2" fill="none" stroke-linecap="round" stroke-linejoin="round"/></svg>
<div class="t" style="left:469.91px;top:512.00px;font-size:29px;line-height:29px;font-weight:400;color:#1f1f1f;letter-spacing:0.000px;-webkit-text-stroke:0.9px #1f1f1f;transform:scaleX(0.9785);transform-origin:0 0;">Shared entrances</div>
<div class="a" style="left:469px;top:570px;width:1020px;height:101px;border:1px solid #e9e9e9;border-radius:20px;background:#fff"></div>
<div class="a" style="left:506px;top:592px;width:58px;height:58px;border-radius:16px;background:#eef4fe"></div><svg class="a" style="left:522.2px;top:602.9px" width="26" height="26" viewBox="0 0 24 24"><path fill="#3c6ef6" stroke="#eef4fe" stroke-width="0.4" d="M22.2819 9.8211a5.9847 5.9847 0 0 0-.5157-4.9108 6.0462 6.0462 0 0 0-6.5098-2.9A6.0651 6.0651 0 0 0 4.9807 4.1818a5.9847 5.9847 0 0 0-3.9977 2.9 6.0462 6.0462 0 0 0 .7427 7.0966 5.98 5.98 0 0 0 .511 4.9107 6.051 6.051 0 0 0 6.5146 2.9001A5.9847 5.9847 0 0 0 13.2599 24a6.0557 6.0557 0 0 0 5.7718-4.2058 5.9894 5.9894 0 0 0 3.9977-2.9001 6.0557 6.0557 0 0 0-.7475-7.0729zm-9.022 12.6081a4.4755 4.4755 0 0 1-2.8764-1.0408l.1419-.0804 4.7783-2.7582a.7948.7948 0 0 0 .3927-.6813v-6.7369l2.02 1.1686a.071.071 0 0 1 .038.052v5.5826a4.504 4.504 0 0 1-4.4945 4.4944zm-9.6607-4.1254a4.4708 4.4708 0 0 1-.5346-3.0137l.142.0852 4.783 2.7582a.7712.7712 0 0 0 .7806 0l5.8428-3.3685v2.3324a.0804.0804 0 0 1-.0332.0615L9.74 19.9502a4.4992 4.4992 0 0 1-6.1408-1.6464zM2.3408 7.8956a4.485 4.485 0 0 1 2.3655-1.9728V11.6a.7664.7664 0 0 0 .3879.6765l5.8144 3.3543-2.0201 1.1685a.0757.0757 0 0 1-.071 0l-4.8303-2.7865A4.504 4.504 0 0 1 2.3408 7.872zm16.5963 3.8558L13.1038 8.364 15.1192 7.2a.0757.0757 0 0 1 .071 0l4.8303 2.7913a4.4944 4.4944 0 0 1-.6765 8.1042v-5.6772a.79.79 0 0 0-.407-.667zm2.0107-3.0231l-.142-.0852-4.7735-2.7818a.7759.7759 0 0 0-.7854 0L9.409 9.2297V6.8974a.0662.0662 0 0 1 .0284-.0615l4.8303-2.7866a4.4992 4.4992 0 0 1 6.6802 4.66zM8.3065 12.863l-2.02-1.1638a.0804.0804 0 0 1-.038-.0567V6.0742a4.4992 4.4992 0 0 1 7.3757-3.4537l-.142.0805L8.704 5.459a.7948.7948 0 0 0-.3927.6813zm1.0976-2.3654l2.602-1.4998 2.6069 1.4998v2.9994l-2.5974 1.4997-2.6067-1.4997Z"/></svg><div class="t" style="left:517.3px;top:629.6px;font-size:9px;line-height:9px;font-weight:700;color:#4a7af4;letter-spacing:0px">Whisp</div><div class="a" style="left:543.9px;top:629.1px;width:19px;height:19px;border-radius:50%;background:linear-gradient(#04ca9c,#0aa68c);box-shadow:0 0 0 0.9px #c9fbef,0 3px 7px rgba(0,0,0,0.16)"></div><svg class="a" style="left:543.9px;top:629.1px" width="19" height="19" viewBox="0 0 19 19"><circle cx="8" cy="7.3" r="2.05" fill="#fff"/><path d="M3.6 14 Q3.8 10.8 7.9 10.8 Q12 10.8 12.1 14 Z" fill="#fff"/><path d="M10.8 5.3 A2.3 2.3 0 0 1 11.2 9.3" stroke="#fff" stroke-width="1.5" fill="none" opacity="0.9"/><path d="M12.6 11.1 L15.6 12.8 L13 14.5 Z" fill="#fff"/></svg>
<div class="t" style="left:578.88px;top:607.00px;font-size:29px;line-height:29px;font-weight:400;color:#1f1f1f;letter-spacing:0.000px;transform:scaleX(0.9725);transform-origin:0 0;">Whisper API</div>
<svg class="a" style="left:1435.3px;top:609px" width="16" height="24" viewBox="0 0 16 24"><path d="M4.5 4.8 L11.5 12 L4.5 19.2" stroke="#222" stroke-width="2.2" fill="none" stroke-linecap="round" stroke-linejoin="round"/></svg>
<div class="t" style="left:468.84px;top:701.00px;font-size:29px;line-height:29px;font-weight:400;color:#1f1f1f;letter-spacing:0.000px;-webkit-text-stroke:0.9px #1f1f1f;transform:scaleX(0.9937);transform-origin:0 0;">Environment variables</div>
<div class="a" style="left:469px;top:759px;width:1020px;height:115px;border:1px solid #e9e9e9;border-radius:20px;background:#fff"></div>
<div class="t" style="left:505.74px;top:803.00px;font-size:29px;line-height:29px;font-weight:400;color:#1f1f1f;letter-spacing:0.000px;transform:scaleX(0.9908);transform-origin:0 0;">Manage environment variables</div>
<svg class="a" style="left:1435.3px;top:805.9px" width="16" height="24" viewBox="0 0 16 24"><path d="M4.5 4.8 L11.5 12 L4.5 19.2" stroke="#6b6b6b" stroke-width="2.2" fill="none" stroke-linecap="round" stroke-linejoin="round"/></svg>
</div></body></html>
